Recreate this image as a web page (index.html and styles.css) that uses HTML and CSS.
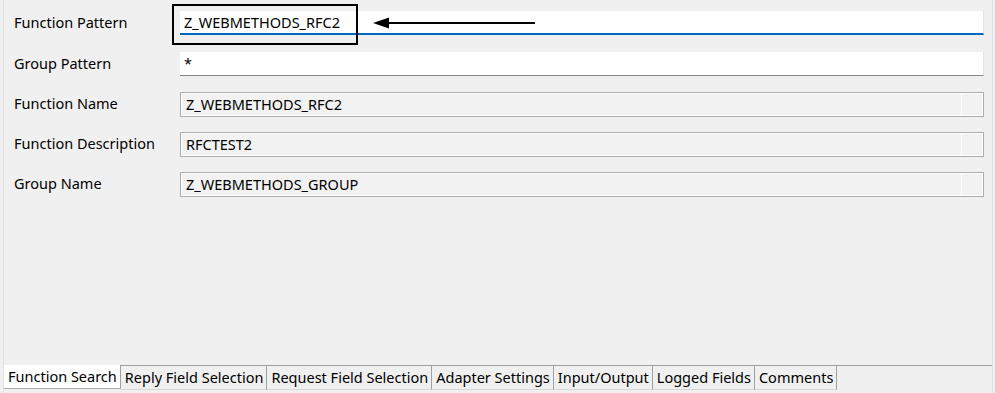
FILE: index.html
```html
<!DOCTYPE html>
<html lang="en">
<head>
    <meta charset="UTF-8">
    <title>Function Search</title>
    <link rel="stylesheet" href="styles.css">
</head>
<body>
    <div class="window">
        <div class="form">
            <div class="label">Function Pattern</div>
            <div class="field-wrap">
                <div class="input focused">Z_WEBMETHODS_RFC2</div>
                <div class="callout"></div>
                <svg class="arrow" width="166" height="14" viewBox="0 0 166 14">
                    <line x1="10" y1="7" x2="163" y2="7" stroke="#000" stroke-width="2"/>
                    <polygon points="1,7 17,1.5 17,12.5" fill="#000"/>
                </svg>
            </div>

            <div class="label">Group Pattern</div>
            <div class="field-wrap">
                <div class="input">*</div>
            </div>

            <div class="label">Function Name</div>
            <div class="field-wrap">
                <div class="readonly">
                    <span class="value">Z_WEBMETHODS_RFC2</span>
                    <span class="btn"></span>
                </div>
            </div>

            <div class="label">Function Description</div>
            <div class="field-wrap">
                <div class="readonly">
                    <span class="value">RFCTEST2</span>
                    <span class="btn"></span>
                </div>
            </div>

            <div class="label">Group Name</div>
            <div class="field-wrap">
                <div class="readonly">
                    <span class="value">Z_WEBMETHODS_GROUP</span>
                    <span class="btn"></span>
                </div>
            </div>
        </div>

        <div class="tabs">
            <div class="tab active">Function Search</div>
            <div class="tab">Reply Field Selection</div>
            <div class="tab">Request Field Selection</div>
            <div class="tab">Adapter Settings</div>
            <div class="tab">Input/Output</div>
            <div class="tab">Logged Fields</div>
            <div class="tab">Comments</div>
        </div>
    </div>
</body>
</html>
```

FILE: styles.css
```css
* {
    margin: 0;
    padding: 0;
    box-sizing: border-box;
}

body {
    font-family: "Noto Sans", "Open Sans", sans-serif;
    font-size: 14.5px;
    color: #000;
    background: #f0f0f0;
    width: 995px;
    height: 393px;
    overflow: hidden;
}

.window {
    height: 393px;
    margin: 0 2px 0 3px;
    border-left: 1px solid #e2e2e2;
    border-right: 1px solid #e2e2e2;
    display: flex;
    flex-direction: column;
}

.form {
    flex: 1;
    display: grid;
    grid-template-columns: 166px 1fr;
    grid-template-rows: 26px repeat(4, 25px);
    row-gap: 15px;
    padding: 11px 8px 0 10px;
    align-content: start;
}

.label {
    line-height: 22px;
    white-space: nowrap;
}

.field-wrap {
    position: relative;
}

.input {
    height: 24px;
    background: #fff;
    border-right: 1px solid #e3e3e3;
    border-bottom: 1px solid #868686;
    padding: 0 4px;
    line-height: 22px;
}

.input.focused {
    border-bottom: 2px solid #0067c0;
}

.readonly {
    height: 25px;
    display: flex;
    background: #f2f2f2;
    border: 1px solid #acacac;
    box-shadow: inset 0 0 0 1px #fff;
    line-height: 22px;
}

.readonly .value {
    flex: 1;
    padding-left: 5px;
}

.readonly .btn {
    width: 22px;
    border-left: 1px solid #fff;
}

/* annotation drawn over the first field */
.callout {
    position: absolute;
    left: -8px;
    top: -7px;
    width: 186px;
    height: 41px;
    border: 2px solid #000;
}

.arrow {
    position: absolute;
    left: 192px;
    top: 5px;
}

.tabs {
    height: 25px;
    display: flex;
    align-items: flex-start;
    border-top: 1px solid #a0a0a0;
    margin-bottom: 3px;
}

.tab {
    height: 24px;
    line-height: 22px;
    padding: 0 3px 0 4px;
    border-right: 1px solid #a0a0a0;
    border-bottom: 1px solid #d8d8d8;
    white-space: nowrap;
}

.tab.active {
    background: #fff;
    margin-top: -1px;
    height: 24px;
    border-right: 1px solid #a0a0a0;
    border-bottom: 1px solid #a8a8a8;
}
```
